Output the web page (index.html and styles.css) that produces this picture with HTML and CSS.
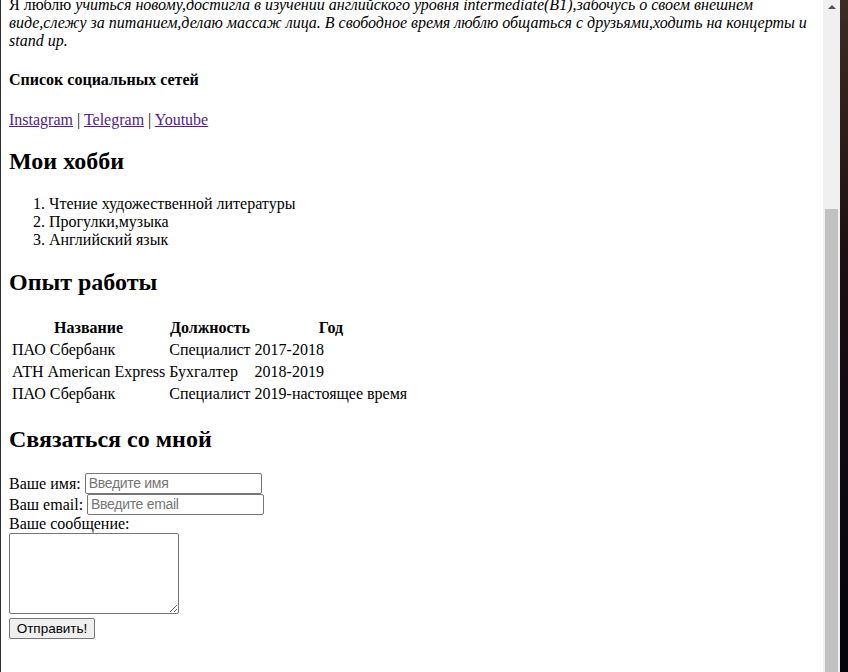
FILE: index.html
```html
<!DOCTYPE html>
<html lang="ru">
<head>
<meta charset="utf-8">
<title>Резюме</title>
<link rel="stylesheet" href="styles.css">
</head>
<body>
<div class="window">
  <div class="frame-edge"></div>
  <div class="viewport">
    <div class="doc">
      <p class="about">Я люблю <em>учиться новому,достигла в изучении английского уровня intermediate(B1),забочусь о своем внешнем виде,слежу за питанием,делаю массаж лица. В свободное время люблю общаться с друзьями,ходить на концерты и stand up.</em></p>
      <h4>Список социальных сетей</h4>
      <p><a href="#" class="visited">Instagram</a> | <a href="#" class="visited">Telegram</a> | <a href="#" class="visited">Youtube</a></p>
      <h2>Мои хобби</h2>
      <ol>
        <li>Чтение художественной литературы</li>
        <li>Прогулки,музыка</li>
        <li>Английский язык</li>
      </ol>
      <h2>Опыт работы</h2>
      <table class="jobs">
        <tr><th>Название</th><th>Должность</th><th>Год</th></tr>
        <tr><td>ПАО Сбербанк</td><td>Специалист</td><td>2017-2018</td></tr>
        <tr><td>АТН American Express</td><td>Бухгалтер</td><td>2018-2019</td></tr>
        <tr><td>ПАО Сбербанк</td><td>Специалист</td><td>2019-настоящее время</td></tr>
      </table>
      <h2>Связаться со мной</h2>
      <form class="contact">
        <label>Ваше имя:</label> <input class="field" type="text" placeholder="Введите имя"><br>
        <label>Ваш email:</label> <input class="field" type="email" placeholder="Введите email"><br>
        <label>Ваше сообщение:</label><br>
        <textarea class="message"></textarea><br>
        <button type="button" class="send">Отправить!</button>
      </form>
    </div>
  </div>
  <div class="scrollbar">
    <div class="arrow"></div>
    <div class="thumb"></div>
  </div>
  <div class="desktop"></div>
</div>
</body>
</html>
```
FILE: styles.css
```css
html, body {
  margin: 0;
  padding: 0;
  width: 848px;
  height: 672px;
  overflow: hidden;
  background: #fff;
}

.window {
  display: flex;
  width: 848px;
  height: 672px;
}

.frame-edge {
  width: 1px;
  background: #2e2e2e;
  flex: none;
}

.viewport {
  flex: 1;
  height: 672px;
  overflow: hidden;
  background: #fff;
  font-family: "Liberation Serif", "Times New Roman", serif;
  font-size: 16px;
  color: #000;
}

.doc {
  padding: 0 8px;
}

.about {
  margin-top: -4px;
}

.visited {
  color: #551a8b;
}

h2 {
  font-size: 24px;
  margin: 19.92px 0;
}

h4 {
  font-size: 16px;
  margin: 21.28px 0;
}

ol {
  margin: 16px 0;
  padding-left: 40px;
}

.jobs {
  border-spacing: 2px;
  border-collapse: separate;
  font-size: 16px;
}

.jobs th, .jobs td {
  padding: 1px;
}

.field,
.message {
  font-family: "Liberation Sans", Arial, sans-serif;
  font-size: 14px;
}

.send {
  font-family: "Liberation Sans", Arial, sans-serif;
  font-size: 13.5px;
}

.field {
  box-sizing: border-box;
  width: 177px;
  height: 21px;
  padding: 0 3px;
  border: 1px solid #767676;
  border-radius: 2px;
  vertical-align: baseline;
  line-height: 17px;
  letter-spacing: -0.3px;
}

.field::placeholder {
  font-family: "Liberation Sans", Arial, sans-serif;
  font-size: 14px;
  letter-spacing: -0.3px;
  color: #757575;
}

.message {
  box-sizing: border-box;
  width: 170px;
  height: 81px;
  border: 1px solid #767676;
  border-radius: 2px;
  padding: 2px;
  margin: 0;
  vertical-align: bottom;
}

.send {
  box-sizing: border-box;
  width: 86px;
  height: 21px;
  margin-top: 4px;
  padding: 0 6px;
  background: #efefef;
  border: 1px solid #767676;
  border-radius: 2px;
  color: #000;
}

.scrollbar {
  width: 17px;
  flex: none;
  background: #f0f0f0;
  position: relative;
}

.arrow {
  position: absolute;
  left: 5px;
  top: 5px;
  width: 0;
  height: 0;
  border-left: 4px solid transparent;
  border-right: 4px solid transparent;
  border-bottom: 4px solid #505050;
}

.thumb {
  position: absolute;
  left: 2px;
  width: 13px;
  top: 209px;
  bottom: 0;
  background: #c1c1c1;
}

.desktop {
  width: 8px;
  flex: none;
  background: linear-gradient(#3d2b24, #1a0f12 40%, #0d0910 70%, #05040a);
}
```
